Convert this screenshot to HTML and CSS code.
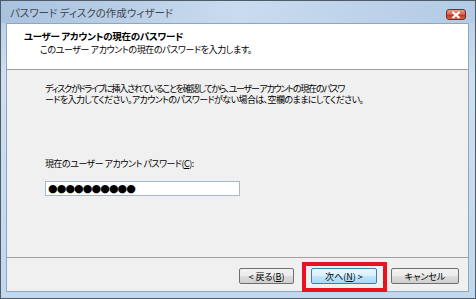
FILE: index.html
```html
<!DOCTYPE html>
<html lang="ja">
<head>
  <meta charset="UTF-8" />
  <title>パスワード ディスクの作成ウィザード</title>
  <link rel="stylesheet" href="styles.css">
</head>
<body>

  <div class="window">
    <div class="titlebar">
      <span class="title">パスワード ディスクの作成ウィザード</span>
      <button class="close" aria-label="閉じる">
        <svg width="10" height="8" viewBox="0 0 10 8">
          <path d="M1.5 1 L8.5 7 M8.5 1 L1.5 7" stroke="#fff" stroke-width="2.2" />
        </svg>
      </button>
    </div>

    <div class="client">
      <div class="wiz-header">
        <div class="wiz-title">ユーザー アカウントの現在のパスワード</div>
        <div class="wiz-sub">このユーザー アカウントの現在のパスワードを入力します。</div>
      </div>

      <div class="wiz-body">
        <p class="desc">
          <span class="line1">ディスクがドライブに挿入されていることを確認してから、ユーザー アカウントの現在のパスワ</span>
          <span class="line2">ードを入力してください。アカウントのパスワードがない場合は、空欄のままにしてください。</span>
        </p>

        <label class="field-label" for="pw">現在のユーザー アカウント パスワード(<u>C</u>):</label>
        <div class="pw-box" id="pw">●●●●●●●●●●</div>
      </div>

      <div class="wiz-footer">
        <button class="btn btn-back">&lt; 戻る(<u>B</u>)</button>
        <span class="mark">
          <button class="btn btn-default">次へ(<u>N</u>) &gt;</button>
        </span>
        <button class="btn btn-cancel">キャンセル</button>
      </div>
    </div>
  </div>

</body>
</html>
```

FILE: styles.css
```css
* {
  margin: 0;
  padding: 0;
  box-sizing: border-box;
}

body {
  font-family: "Noto Sans CJK JP", sans-serif;
  font-size: 11px;
  font-feature-settings: "palt";
  background: #ffffff;
}

/* Window frame */
.window {
  width: 476px;
  height: 299px;
  border: 1px solid #4d5b6b;
  background: linear-gradient(180deg, #b5cce6 0%, #cfdff0 25%, #c2d8ee 100%);
  display: flex;
  flex-direction: column;
}

.titlebar {
  height: 22px;
  display: flex;
  align-items: center;
  justify-content: space-between;
  padding: 0 9px 0 9px;
  background: linear-gradient(90deg, #a9c2de 0%, #c9dbef 50%, #b3cbe5 100%);
}

.title {
  color: #3e4650;
  font-size: 10.5px;
  margin-top: 1px;
}

.close {
  width: 20px;
  height: 11px;
  margin-top: 5px;
  border: 1px solid #7a2a20;
  border-radius: 3px;
  background: linear-gradient(180deg, #e8a090 0%, #d0604a 50%, #b8321e 55%, #d46a50 100%);
  display: flex;
  align-items: center;
  justify-content: center;
}

/* Client area */
.client {
  flex: 1;
  margin: 0 6px 6px 5px;
  border: 1px solid #8da6c2;
  background: #f0f0f0;
  display: flex;
  flex-direction: column;
}

.wiz-header {
  height: 46px;
  background: #ffffff;
  border-bottom: 1px solid #a0a0a0;
  padding: 6px 0 0 17px;
  line-height: 13px;
}

.wiz-title {
  font-weight: bold;
  font-size: 9.5px;
  letter-spacing: -0.3px;
  color: #000;
}

.wiz-sub {
  padding-left: 16px;
  font-size: 9px;
  letter-spacing: -0.4px;
  color: #000;
}

.wiz-body {
  flex: 1;
  padding: 13px 0 0 38px;
  color: #000;
}

.desc {
  font-size: 9px;
}

.desc span {
  display: block;
  height: 11px;
  line-height: 11px;
  white-space: nowrap;
}

.line1 {
  letter-spacing: -1.25px;
}

.line2 {
  letter-spacing: -0.6px;
}

.field-label {
  display: block;
  margin-top: 53px;
  line-height: 11px;
  font-size: 9px;
  letter-spacing: -0.5px;
}

.pw-box {
  margin-top: 12px;
  width: 195px;
  height: 15px;
  border: 1px solid #a4b8d0;
  background: #ffffff;
  font-family: "DejaVu Sans", sans-serif;
  font-size: 11px;
  line-height: 13px;
  padding-left: 2px;
  letter-spacing: -0.9px;
  font-feature-settings: normal;
}

/* Footer with buttons */
.wiz-footer {
  height: 34px;
  border-top: 1px solid #a0a0a0;
  display: flex;
  justify-content: flex-end;
  align-items: flex-start;
  padding: 10px 9px 0 0;
}

.btn {
  height: 16px;
  border: 1px solid #707070;
  border-radius: 2px;
  background: linear-gradient(180deg, #f2f2f2 0%, #ebebeb 50%, #dddddd 52%, #cfcfcf 100%);
  font-family: "Noto Sans CJK JP", sans-serif;
  font-size: 9px;
  font-feature-settings: "palt";
  line-height: 13px;
  color: #000;
}

.btn-back {
  width: 55px;
}

.btn-default {
  width: 66px;
  border-color: #3c7fb1;
  background: linear-gradient(180deg, #eaf6fd 0%, #d9f0fc 50%, #bee6fd 52%, #a7d9f5 100%);
}

.btn-cancel {
  width: 68px;
  margin-left: 14px;
}

/* red annotation frame drawn over the next button */
.mark {
  position: relative;
  margin-left: 17px;
  display: flex;
}

.mark::after {
  content: "";
  position: absolute;
  box-sizing: border-box;
  left: -9px;
  top: -6px;
  width: 85px;
  height: 30px;
  border: 4px solid #e8141c;
}
```
